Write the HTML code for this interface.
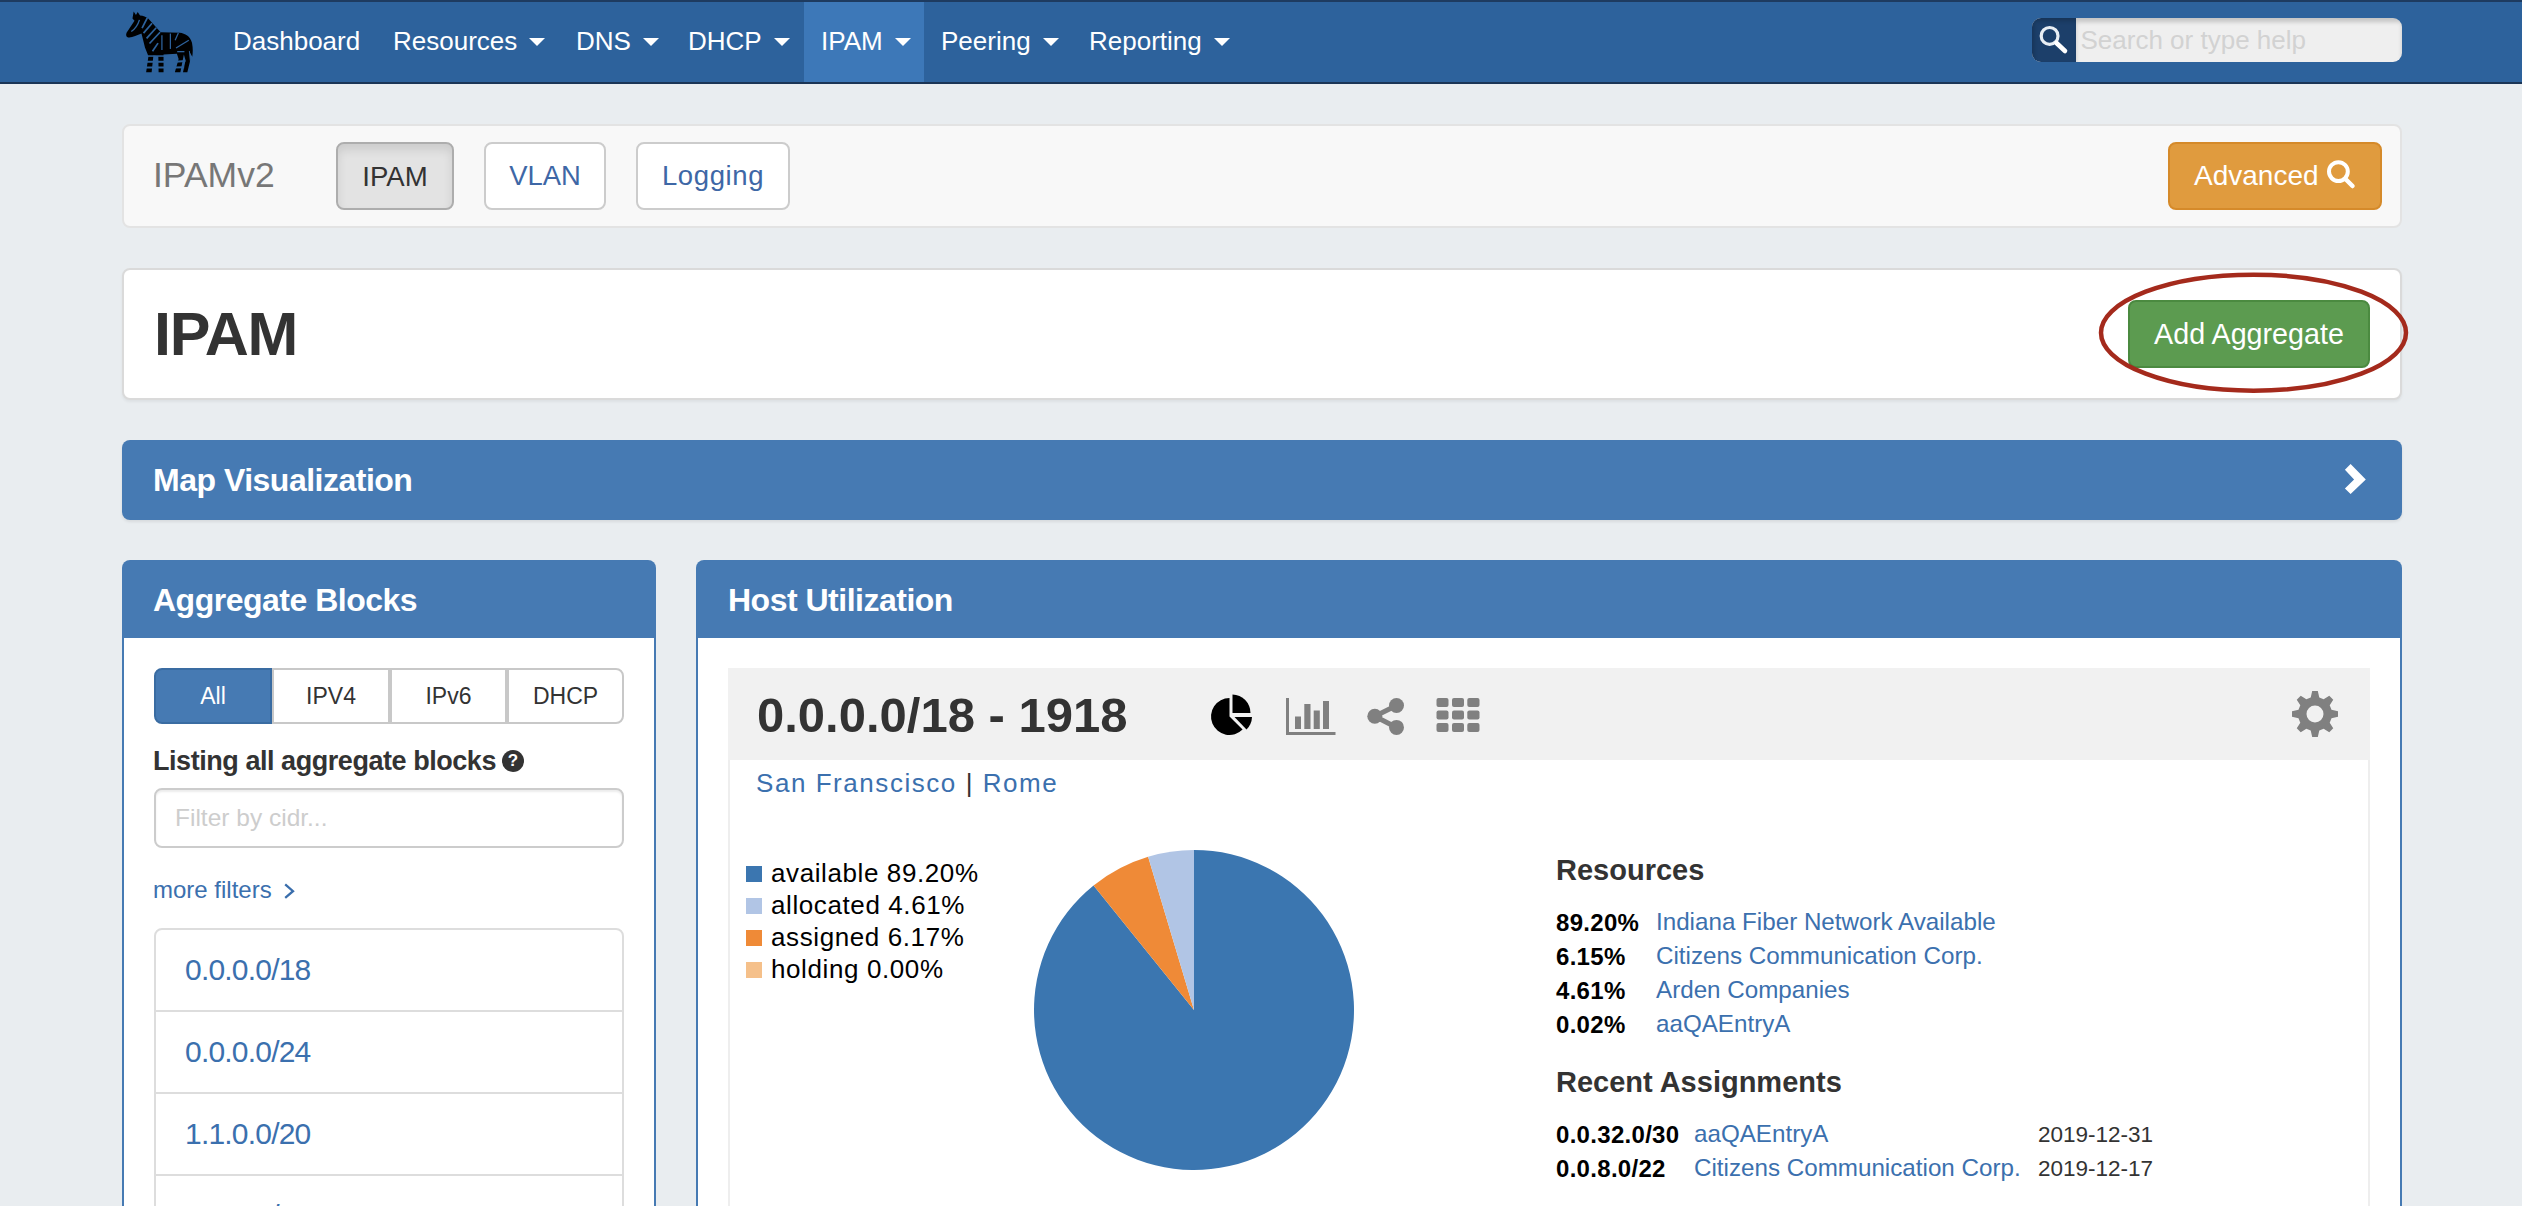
<!DOCTYPE html>
<html><head><meta charset="utf-8">
<style>
*{box-sizing:border-box;margin:0;padding:0}
html,body{width:2522px;height:1206px;overflow:hidden}
body{background:#e9edf0;font-family:"Liberation Sans",sans-serif;position:relative;color:#333}
.abs{position:absolute}
/* nav */
#nav{position:absolute;left:0;top:0;width:2522px;height:84px;background:#2d629c;border-top:2px solid #1e3b60;border-bottom:2px solid #1b3556}
.ni{position:absolute;top:-1px;height:80px;line-height:80px;color:#fff;font-size:26px;white-space:nowrap}
.caret{display:inline-block;width:0;height:0;border-left:8px solid transparent;border-right:8px solid transparent;border-top:8px solid #fff;vertical-align:middle;margin-left:12px;position:relative;top:-1px}
#active{position:absolute;left:804px;top:0;width:120px;height:80px;background:#3d78b8}
#search{position:absolute;left:2032px;top:16px;width:370px;height:44px;border-radius:9px;overflow:hidden;background:#efefef}
#search .ic{position:absolute;left:0;top:0;width:44px;height:44px;background:#1c3f6a;box-shadow:inset 2px 3px 4px rgba(0,0,0,.18)}
#search .sh{position:absolute;left:44px;top:0;right:0;bottom:0;box-shadow:inset 0 4px 4px rgba(0,0,0,.18)}
#search .ph{position:absolute;left:48.5px;top:0;line-height:44px;font-size:26px;color:#d2d2d2}
/* panels */
.well{position:absolute;background:#f8f8f8;border:2px solid #e3e3e3;border-radius:8px}
.card{position:absolute;background:#fff;border:2px solid #dadada;border-radius:8px;box-shadow:0 2px 3px rgba(0,0,0,.05)}
.btn{position:absolute;border-radius:8px;font-size:26px;text-align:center;white-space:nowrap}
.blue{color:#3b70ae}
.phead{position:absolute;background:#467ab3;color:#fff;font-weight:bold;font-size:32px;letter-spacing:-0.5px}
.panel{position:absolute;border:2px solid #467ab3;border-top:none;background:#fff}
</style></head><body>
<div id="nav">
  <div id="active"></div>
  <svg class="abs" style="left:120px;top:6px" width="80" height="70" viewBox="0 0 1378 1206">
<path fill="#000" d="M235 62 L275 122 L305 68 L345 128 C400 133 450 150 490 185 L700 418 L1030 428 C1120 438 1210 488 1240 600 C1260 700 1255 780 1245 840 L1200 760 L1210 900 L1160 1105 L1085 1105 L1130 900 L1100 800 L1040 1105 L945 1105 L1010 880 L980 790 L750 800 L750 1105 L665 1105 L660 830 L575 820 L545 1105 L450 1105 L490 830 L430 680 L370 440 C300 470 220 500 160 510 C100 510 90 450 130 400 L250 220 L215 180 Z"/>
<g stroke="#2d629c" fill="none">
<path d="M195 405 C260 360 310 290 335 205" stroke-width="24"/>
<path d="M470 170 L380 345" stroke-width="30"/>
<path d="M552 262 L405 432" stroke-width="30"/>
<path d="M624 340 L458 522" stroke-width="30"/>
<path d="M690 418 L508 612" stroke-width="30"/>
<path d="M655 605 L560 745" stroke-width="30"/>
<path d="M722 470 L722 725" stroke-width="22"/>
<path d="M868 440 L868 705" stroke-width="22"/>
<path d="M1005 430 L950 555" stroke-width="22"/>
<path d="M1185 555 L965 690" stroke-width="22"/>
<path d="M985 752 L1110 752" stroke-width="22"/>
<path d="M1195 740 L1215 940" stroke-width="16"/>
<path d="M430 925 L770 925 M430 1025 L770 1025" stroke-width="34"/>
<path d="M470 828 L770 828" stroke-width="26"/>
<path d="M960 925 L1125 915 M935 1025 L1105 1020" stroke-width="34"/>
</g>
</svg>
  <div class="ni" style="left:233px">Dashboard</div>
  <div class="ni" style="left:393px">Resources<span class="caret"></span></div>
  <div class="ni" style="left:576px">DNS<span class="caret"></span></div>
  <div class="ni" style="left:688px">DHCP<span class="caret"></span></div>
  <div class="ni" style="left:821px">IPAM<span class="caret"></span></div>
  <div class="ni" style="left:941px">Peering<span class="caret"></span></div>
  <div class="ni" style="left:1089px">Reporting<span class="caret"></span></div>
  <div id="search"><div class="ic"><svg width="44" height="44" viewBox="2032 18 44 44" style="display:block"><circle cx="2049.6" cy="35.9" r="8.4" fill="none" stroke="#e8eef4" stroke-width="3.2"/><path d="M2056.5 43 L2065 51" stroke="#fff" stroke-width="4.6" stroke-linecap="round"/></svg></div><div class="sh"></div><div class="ph">Search or type help</div></div>
</div>

<div class="well" style="left:122px;top:124px;width:2280px;height:104px">
</div>
<div class="abs" style="left:153px;top:150px;font-size:35.5px;color:#777;line-height:50px">IPAMv2</div>
<div class="btn" style="left:336px;top:142px;width:118px;height:68px;line-height:64px;background:#e3e3e3;border:2px solid #adadad;color:#333;box-shadow:inset 0 6px 10px rgba(0,0,0,.1);font-size:27.6px;line-height:66px">IPAM</div>
<div class="btn" style="color:#3e67a6;left:484px;top:142px;width:122px;height:68px;line-height:64px;background:#fff;border:2px solid #ccc;font-size:27.4px">VLAN</div>
<div class="btn" style="color:#3e67a6;left:636px;top:142px;width:154px;height:68px;line-height:64px;background:#fff;border:2px solid #ccc;font-size:27.5px;letter-spacing:0.6px">Logging</div>
<div class="btn" style="left:2168px;top:142px;width:214px;height:68px;line-height:64px;background:#e09b3e;border:2px solid #d58a2a;color:#fff;font-size:28px;text-align:left;padding-left:24px">Advanced</div>
<svg class="abs" style="left:2320px;top:152px" width="40" height="40" viewBox="2320 152 40 40"><circle cx="2338.4" cy="171.6" r="9.4" fill="none" stroke="#fff" stroke-width="4"/><path d="M2346 179.5 L2352.5 186" stroke="#fff" stroke-width="4.5" stroke-linecap="round"/></svg>

<div class="card" style="left:122px;top:268px;width:2280px;height:132px"></div>
<div class="abs" style="left:154px;top:298px;font-size:61px;font-weight:bold;color:#333;line-height:72px;letter-spacing:-1.2px">IPAM</div>
<div class="btn" style="left:2128px;top:300px;width:242px;height:68px;line-height:64px;background:#5c9b50;border:2px solid #4b8a40;color:#fff;font-size:28.7px">Add Aggregate</div>

<div class="abs" style="left:122px;top:440px;width:2280px;height:80px;background:#467ab3;border-radius:8px;box-shadow:0 2px 3px rgba(0,0,0,.08)"></div>
<div class="abs" style="left:153px;top:440px;line-height:80px;font-size:32px;letter-spacing:-0.5px;font-weight:bold;color:#fff">Map Visualization</div>

<svg class="abs" style="left:2340px;top:460px" width="30" height="40" viewBox="2340 460 30 40"><path d="M2350.6 463.9 L2365.8 479.4 L2350.6 494 L2344.9 488.6 L2354.1 479.4 L2344.9 469.7 Z" fill="#fff"/></svg>
<!-- aggregate blocks -->
<div class="phead" style="left:122px;top:560px;width:534px;height:78px;border-radius:8px 8px 0 0;line-height:80px;padding-left:31px">Aggregate Blocks</div>
<div class="panel" style="left:122px;top:638px;width:534px;height:600px"></div>

<!-- host utilization -->
<div class="phead" style="left:696px;top:560px;width:1706px;height:78px;border-radius:8px 8px 0 0;line-height:80px;padding-left:32px">Host Utilization</div>
<div class="panel" style="left:696px;top:638px;width:1706px;height:600px"></div>


<!-- aggregate blocks body -->
<div class="abs" style="left:154px;top:668px;width:118px;height:56px;border-radius:8px 0 0 8px;border:2px solid #3a6ca2;background:#467ab3;color:#fff;font-size:23px;line-height:52px;text-align:center">All</div>
<div class="abs" style="left:272px;top:668px;width:118px;height:56px;border:2px solid #c8c8c8;background:#fff;font-size:23px;line-height:52px;text-align:center;color:#333">IPV4</div>
<div class="abs" style="left:390px;top:668px;width:117px;height:56px;border:2px solid #c8c8c8;background:#fff;font-size:23px;line-height:52px;text-align:center;color:#333">IPv6</div>
<div class="abs" style="left:507px;top:668px;width:117px;height:56px;border:2px solid #c8c8c8;border-radius:0 8px 8px 0;background:#fff;font-size:23px;line-height:52px;text-align:center;color:#333">DHCP</div>
<div class="abs" style="left:153px;top:742.5px;font-size:27px;letter-spacing:-0.45px;font-weight:bold;color:#333;line-height:36px;white-space:nowrap">Listing all aggregate blocks</div>
<div class="abs" style="left:502px;top:750px;width:22px;height:22px;border-radius:50%;background:#333;color:#fff;font-size:17px;font-weight:bold;line-height:22px;text-align:center">?</div>
<div class="abs" style="left:154px;top:788px;width:470px;height:60px;border:2px solid #ccc;border-radius:8px;background:#fff;box-shadow:inset 0 2px 2px rgba(0,0,0,.075)">
  <div class="abs" style="left:19px;top:0;line-height:56px;font-size:24.5px;color:#cdcdcd">Filter by cidr...</div>
</div>
<div class="abs blue" style="left:153px;top:872px;font-size:24px;line-height:36px;white-space:nowrap">more filters</div>
<svg class="abs" style="left:282px;top:880px" width="14" height="20" viewBox="0 0 14 20"><path d="M3.2 4.4 L11 11.2 L3.2 17.8" fill="none" stroke="#3a6eac" stroke-width="2.3"/></svg>
<div class="abs" style="left:154px;top:928px;width:470px;height:400px;border:2px solid #ddd;border-radius:8px;background:#fff"></div>
<div class="abs" style="left:156px;top:1010px;width:466px;height:2px;background:#ddd"></div>
<div class="abs" style="left:156px;top:1092px;width:466px;height:2px;background:#ddd"></div>
<div class="abs" style="left:156px;top:1174px;width:466px;height:2px;background:#ddd"></div>
<div class="abs blue" style="left:185px;top:949.5px;font-size:30px;letter-spacing:-0.8px;line-height:40px">0.0.0.0/18</div>
<div class="abs blue" style="left:185px;top:1031.5px;font-size:30px;letter-spacing:-0.8px;line-height:40px">0.0.0.0/24</div>
<div class="abs blue" style="left:185px;top:1113.5px;font-size:30px;letter-spacing:-0.8px;line-height:40px">1.1.0.0/20</div>
<div class="abs blue" style="left:185px;top:1195.5px;font-size:30px;letter-spacing:-0.8px;line-height:40px">1.1.0.0/24</div>

<!-- host utilization body -->
<div class="abs" style="left:728px;top:668px;width:1642px;height:92px;background:#f1f1f1"></div>
<div class="abs" style="left:728px;top:760px;width:1642px;height:500px;border-left:2px solid #eee;border-right:2px solid #eee"></div>
<div class="abs" style="left:757px;top:685px;font-size:49px;letter-spacing:0px;font-weight:bold;color:#333;line-height:60px;white-space:nowrap">0.0.0.0/18 - 1918</div>
<svg class="abs" style="left:1195px;top:680px" width="300" height="70" viewBox="1195 680 300 70">
  <path d="M1229.5 698 L1229.5 716.5 L1242.58 729.58 A18.5 18.5 0 1 1 1229.5 698 Z" fill="#000"/>
  <path d="M1232.5 694.5 A18.5 18.5 0 0 1 1250.5 713 L1232.5 713 Z" fill="#000"/>
  <path d="M1234.5 717 L1252 717 A18.5 18.5 0 0 1 1246.5 729.5 Z" fill="#000"/>
  <g fill="#808080">
    <rect x="1286" y="698" width="3" height="37"/>
    <rect x="1286" y="732" width="49.5" height="3"/>
    <rect x="1295" y="716.5" width="6" height="12.5"/>
    <rect x="1304.3" y="704" width="6.2" height="25"/>
    <rect x="1313.7" y="710.5" width="6.1" height="18.5"/>
    <rect x="1323" y="701" width="6" height="28"/>
  </g>
  <g fill="#808080">
    <circle cx="1396.5" cy="705.5" r="7.5"/>
    <circle cx="1374.8" cy="716.3" r="7.5"/>
    <circle cx="1396.5" cy="727.4" r="7.5"/>
    <path d="M1396.5 705.5 L1374.8 716.3 L1396.5 727.4" fill="none" stroke="#808080" stroke-width="5"/>
  </g>
  <g fill="#808080">
    <rect x="1436.5" y="698" width="12" height="9" rx="2"/><rect x="1452" y="698" width="12" height="9" rx="2"/><rect x="1467.3" y="698" width="12.2" height="9" rx="2"/>
    <rect x="1436.5" y="710.5" width="12" height="9" rx="2"/><rect x="1452" y="710.5" width="12" height="9" rx="2"/><rect x="1467.3" y="710.5" width="12.2" height="9" rx="2"/>
    <rect x="1436.5" y="723" width="12" height="9" rx="2"/><rect x="1452" y="723" width="12" height="9" rx="2"/><rect x="1467.3" y="723" width="12.2" height="9" rx="2"/>
  </g>
</svg>
<svg class="abs" style="left:2285px;top:684px" width="60" height="60" viewBox="-30 -30 60 60">
  <path fill="#808080" fill-rule="evenodd" d="M-4.30 -16.50 L-2.80 -23.00 L2.80 -23.00 L4.30 -16.50 L8.63 -14.71 L14.28 -18.24 L18.24 -14.28 L14.71 -8.63 L16.50 -4.30 L23.00 -2.80 L23.00 2.80 L16.50 4.30 L14.71 8.63 L18.24 14.28 L14.28 18.24 L8.63 14.71 L4.30 16.50 L2.80 23.00 L-2.80 23.00 L-4.30 16.50 L-8.63 14.71 L-14.28 18.24 L-18.24 14.28 L-14.71 8.63 L-16.50 4.30 L-23.00 2.80 L-23.00 -2.80 L-16.50 -4.30 L-14.71 -8.63 L-18.24 -14.28 L-14.28 -18.24 L-8.63 -14.71 Z M8.5 0 A8.5 8.5 0 1 0 -8.5 0 A8.5 8.5 0 1 0 8.5 0 Z"/>
</svg>
<div class="abs" style="left:756px;top:764.5px;font-size:26px;line-height:36px;letter-spacing:1.55px;white-space:nowrap;color:#333"><span class="blue">San Franscisco</span> | <span class="blue">Rome</span></div>

<!-- legend -->
<div class="abs" style="left:746px;top:866px;width:16px;height:16px;background:#3b76b0"></div>
<div class="abs" style="left:746px;top:898px;width:16px;height:16px;background:#b1c5e5"></div>
<div class="abs" style="left:746px;top:930px;width:16px;height:16px;background:#ef8a37"></div>
<div class="abs" style="left:746px;top:962px;width:16px;height:16px;background:#f5c08a"></div>
<div class="abs" style="left:771px;top:857px;font-size:26px;letter-spacing:0.6px;line-height:32px;color:#000;white-space:nowrap">available 89.20%<br>allocated 4.61%<br>assigned 6.17%<br>holding 0.00%</div>
<svg class="abs" style="left:1000px;top:840px" width="400" height="350" viewBox="1000 840 400 350">
<path d="M1194 1010 L1194.00 850.00 A160 160 0 1 1 1093.57 885.45 Z" fill="#3b76b0"/>
<path d="M1194 1010 L1093.57 885.45 A160 160 0 0 1 1148.11 856.72 Z" fill="#ef8a37"/>
<path d="M1194 1010 L1148.11 856.72 A160 160 0 0 1 1193.99 850.00 Z" fill="#b1c5e5"/>
</svg>

<!-- resources -->
<div class="abs" style="left:1556px;top:852px;font-size:29px;font-weight:bold;color:#333;line-height:36px">Resources</div>
<div class="abs" style="left:1556px;top:906px;font-size:24px;letter-spacing:0.3px;line-height:34px;font-weight:bold;color:#000">89.20%<br>6.15%<br>4.61%<br>0.02%</div>
<div class="abs blue" style="left:1656px;top:905px;font-size:24.2px;line-height:34px;white-space:nowrap">Indiana Fiber Network Available<br>Citizens Communication Corp.<br>Arden Companies<br>aaQAEntryA</div>
<div class="abs" style="left:1556px;top:1064px;font-size:29px;font-weight:bold;color:#333;line-height:36px;white-space:nowrap">Recent Assignments</div>
<div class="abs" style="left:1556px;top:1118px;font-size:24px;letter-spacing:0.3px;line-height:34px;font-weight:bold;color:#000">0.0.32.0/30<br>0.0.8.0/22</div>
<div class="abs blue" style="left:1694px;top:1117px;font-size:24.2px;line-height:34px;white-space:nowrap">aaQAEntryA<br>Citizens Communication Corp.</div>
<div class="abs" style="left:2038px;top:1118px;font-size:22.5px;line-height:34px;color:#333">2019-12-31<br>2019-12-17</div>

<!-- ellipse -->
<svg class="abs" style="left:2090px;top:265px" width="330" height="135" viewBox="2090 265 330 135">
<ellipse cx="2253.5" cy="332.7" rx="152.5" ry="58" fill="none" stroke="#a42a1c" stroke-width="4.5"/>
</svg>
</body></html>
